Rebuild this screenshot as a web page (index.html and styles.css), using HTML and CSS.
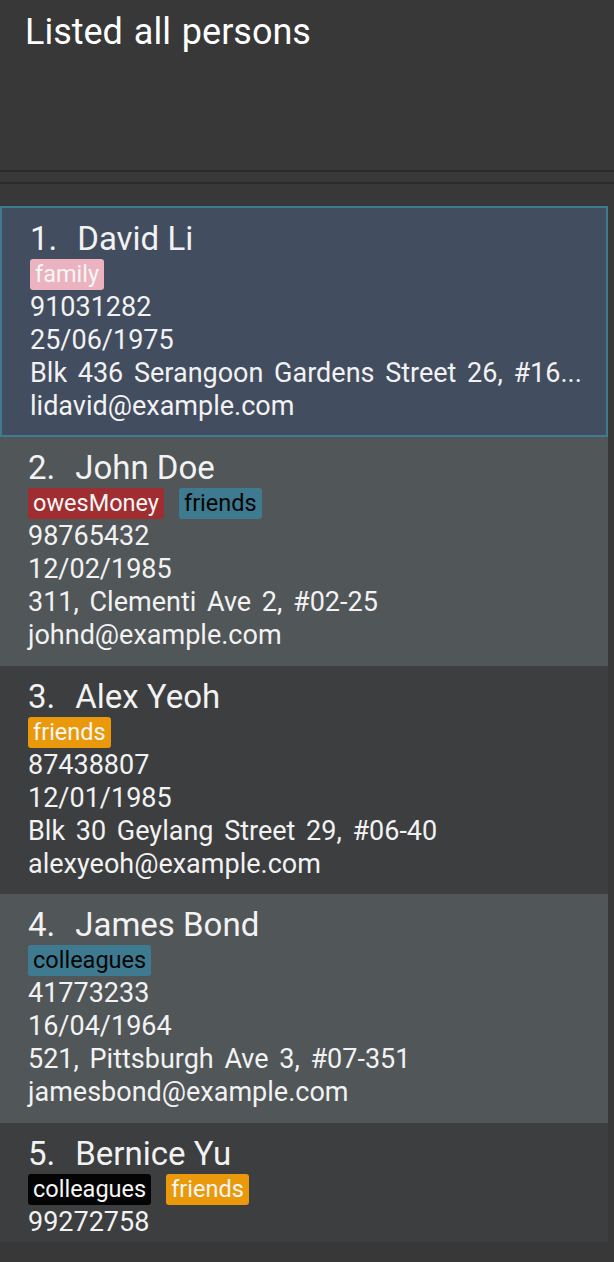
FILE: index.html
```html
<!DOCTYPE html>
<html>
<head>
<meta charset="utf-8">
<link rel="stylesheet" href="styles.css">
</head>
<body>
<div class="app">
  <div class="result">Listed all persons</div>
  <div class="divider"></div>
  <div class="spacer"></div>
  <div class="divider"></div>
  <div class="list">
    <div class="card card-a selected">
      <div class="name"><span class="idx">1.</span><span>David Li</span></div>
      <div class="tags"><span class="tag pink">family</span></div>
      <div class="details">
        <div>91031282</div>
        <div>25/06/1975</div>
        <div>Blk 436 Serangoon Gardens Street 26, #16...</div>
        <div>lidavid@example.com</div>
      </div>
    </div>
    <div class="card card-b">
      <div class="name"><span class="idx">2.</span><span>John Doe</span></div>
      <div class="tags"><span class="tag red">owesMoney</span><span class="tag blue">friends</span></div>
      <div class="details">
        <div>98765432</div>
        <div>12/02/1985</div>
        <div>311, Clementi Ave 2, #02-25</div>
        <div>johnd@example.com</div>
      </div>
    </div>
    <div class="card card-c">
      <div class="name"><span class="idx">3.</span><span>Alex Yeoh</span></div>
      <div class="tags"><span class="tag orange">friends</span></div>
      <div class="details">
        <div>87438807</div>
        <div>12/01/1985</div>
        <div>Blk 30 Geylang Street 29, #06-40</div>
        <div>alexyeoh@example.com</div>
      </div>
    </div>
    <div class="card card-b">
      <div class="name"><span class="idx">4.</span><span>James Bond</span></div>
      <div class="tags"><span class="tag blue">colleagues</span></div>
      <div class="details">
        <div>41773233</div>
        <div>16/04/1964</div>
        <div>521, Pittsburgh Ave 3, #07-351</div>
        <div>jamesbond@example.com</div>
      </div>
    </div>
    <div class="card card-c last">
      <div class="name"><span class="idx">5.</span><span>Bernice Yu</span></div>
      <div class="tags"><span class="tag black">colleagues</span><span class="tag orange">friends</span></div>
      <div class="details">
        <div>99272758</div>
      </div>
    </div>
  </div>
</div>
</body>
</html>
```
FILE: styles.css
```css
html, body {
  margin: 0;
  padding: 0;
  background: #383838;
}
body {
  font-family: Roboto, "Liberation Sans", sans-serif;
  color: #f2f2f2;
}
.app {
  width: 614px;
  height: 1262px;
  overflow: hidden;
  display: flex;
  flex-direction: column;
}
.result {
  height: 170px;
  box-sizing: border-box;
  padding: 11px 0 0 25px;
  font-size: 36px;
  line-height: 42px;
  word-spacing: 2px;
  color: #ffffff;
}
.divider {
  height: 2px;
  background: #2b2b2b;
}
.spacer {
  height: 10px;
}
.list {
  margin-top: 22px;
  width: 608px;
  height: 1036px;
  overflow: hidden;
  display: flex;
  flex-direction: column;
  flex-shrink: 0;
}
.card {
  flex-shrink: 0;
  padding: 12px 0 13px 28px;
  white-space: nowrap;
  overflow: hidden;
}
.card.last {
  flex-grow: 1;
  padding-bottom: 0;
}
.card-a { background: #424d5f; }
.card-b { background: #515658; }
.card-c { background: #3c3e3f; }
.selected {
  border: 2px solid #3e7b91;
  padding-bottom: 11.5px;
}
.name {
  display: flex;
  gap: 20px;
  font-size: 33px;
  line-height: 38px;
}
.tags {
  display: flex;
  gap: 15px;
  margin-top: 1px;
  height: 31px;
}
.tag {
  font-size: 23.5px;
  line-height: 31px;
  padding: 0 5px;
  border-radius: 3px;
  color: #f6f6f6;
}
.pink { background: #ebb3c0; }
.red { background: #a02e30; }
.blue { background: #3e7b91; color: #050505; }
.orange { background: #ea990b; }
.black { background: #040404; }
.details {
  margin-top: 1px;
  font-size: 27px;
  line-height: 33.125px;
  word-spacing: 4px;
}
```
